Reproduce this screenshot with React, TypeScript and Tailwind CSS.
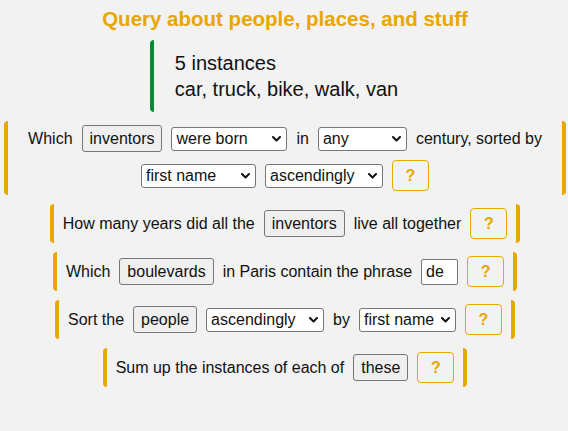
import { ReactNode } from "react";

const amber = "text-[#e8a600]";

function Chevron() {
	return (
		<svg width="9" height="6" viewBox="0 0 9 6" className="shrink-0">
			<path
				d="M1 1 L4.5 4.5 L8 1"
				fill="none"
				stroke="#111"
				strokeWidth="2"
				strokeLinecap="round"
				strokeLinejoin="round"
			/>
		</svg>
	);
}

function Pick({ value, options, width }: { value: string; options: string[]; width: string }) {
	return (
		<div
			className={`flex h-6 items-center rounded-[3px] border border-[#767676] bg-white pr-[5px] ${width}`}
		>
			<select
				defaultValue={value}
				className="min-w-0 flex-1 appearance-none bg-transparent pl-1 leading-[22px] text-[#111] outline-none"
			>
				{options.map((o) => (
					<option key={o}>{o}</option>
				))}
			</select>
			<Chevron />
		</div>
	);
}

function Thing({ children }: { children: ReactNode }) {
	return (
		<button className="flex h-[27px] items-center rounded-[3px] border border-[#767676] bg-[#efefef] px-[7px] text-[#111]">
			{children}
		</button>
	);
}

function Ask() {
	return (
		<button
			className={`flex h-[31px] w-[37px] items-center justify-center rounded-[4px] border border-[#e8a600] font-bold ${amber}`}
		>
			?
		</button>
	);
}

function Query({ children }: { children: ReactNode }) {
	return (
		<div className="flex flex-wrap items-center justify-center gap-x-[9px] gap-y-2 rounded-[4px] border-x-4 border-[#e8a600] px-[9px] py-1">
			{children}
		</div>
	);
}

export default function App() {
	return (
		<div
			className="min-h-[431px] bg-[#f2f2f2] pl-1 pr-0.5 pt-[7px] text-base text-[#111]"
			style={{ fontFamily: '"Liberation Sans", Arial, sans-serif' }}
		>
			<h1 className={`mb-[9px] text-center text-[20.5px] font-bold leading-6 ${amber}`}>
				Query about people, places, and stuff
			</h1>

			<div className="mx-auto w-fit rounded-l-[4px] border-l-4 border-[#0a8a33] py-2.5 pl-[21px] pr-[22px] text-[20px] leading-[26px]">
				<div>5 instances</div>
				<div>car, truck, bike, walk, van</div>
			</div>

			<div className="mt-[9px] flex flex-col items-center gap-[9px]">
				<Query>
					<span>Which</span>
					<Thing>inventors</Thing>
					<Pick value="were born" options={["were born", "died"]} width="w-[116px]" />
					<span>in</span>
					<Pick value="any" options={["any", "19th", "20th"]} width="w-[89px]" />
					<span>century, sorted by</span>
					<Pick value="first name" options={["first name", "last name"]} width="w-[115px]" />
					<Pick value="ascendingly" options={["ascendingly", "descendingly"]} width="w-[118px]" />
					<Ask />
				</Query>

				<Query>
					<span>How many years did all the</span>
					<Thing>inventors</Thing>
					<span>live all together</span>
					<Ask />
				</Query>

				<Query>
					<span>Which</span>
					<Thing>boulevards</Thing>
					<span>in Paris contain the phrase</span>
					<input
						defaultValue="de"
						className="h-[26px] w-[37px] rounded-[2px] border border-[#767676] bg-white px-1 text-[#111] outline-none"
					/>
					<Ask />
				</Query>

				<Query>
					<span>Sort the</span>
					<Thing>people</Thing>
					<Pick value="ascendingly" options={["ascendingly", "descendingly"]} width="w-[118px]" />
					<span>by</span>
					<Pick value="first name" options={["first name", "last name"]} width="w-[97px]" />
					<Ask />
				</Query>

				<Query>
					<span>Sum up the instances of each of</span>
					<Thing>these</Thing>
					<Ask />
				</Query>
			</div>
		</div>
	);
}
